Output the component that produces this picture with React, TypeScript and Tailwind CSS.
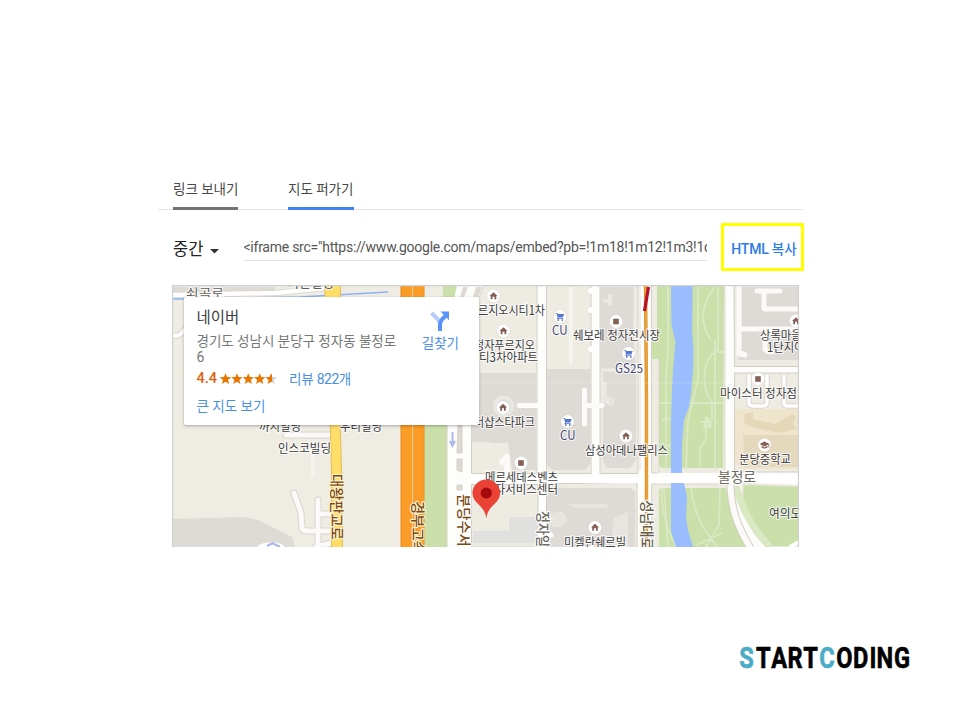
import React from "react";

const KR = "font-['Roboto','Noto_Sans_CJK_KR',sans-serif]";

type LabelProps = {
  x: number;
  y: number;
  w: number;
  children: string;
  fill?: string;
  size?: number;
};

function Label({ x, y, w, children, fill = "#3c3c3c", size = 12.5 }: LabelProps) {
  return (
    <text x={x} y={y} fontSize={size} fill={fill} stroke="#fff" strokeOpacity={0.8} strokeWidth={2.2} strokeLinejoin="round" paintOrder="stroke" textLength={w} lengthAdjust="spacingAndGlyphs" fontWeight={400}>
      {children}
    </text>
  );
}

function RoadName({ x, y, w, children, fill = "#7a4a14", halo = "#fff3d0" }: LabelProps & { halo?: string }) {
  return (
    <text transform={`translate(${x} ${y}) rotate(90)`} fontSize={14} fill={fill} stroke={halo} strokeWidth={2.2} strokeLinejoin="round" paintOrder="stroke" textLength={w} lengthAdjust="spacingAndGlyphs" fontWeight={500}>
      {children}
    </text>
  );
}

function Pin({ x, y, kind }: { x: number; y: number; kind: "home" | "cart" | "shop" | "school" }) {
  return (
    <g transform={`translate(${x} ${y})`}>
      <circle r={7} fill="#d5d0c8" opacity={0.5} />
      <circle r={6.4} fill="#fff" />
      {kind === "home" && <path d="M-4 0L0-3.7L4 0H2.8V3.2H1V.8H-1V3.2H-2.8V0Z" fill="#846057" />}
      {kind === "shop" && <rect x={-2.8} y={-2.8} width={5.6} height={5.6} fill="#846057" />}
      {kind === "cart" && (
        <g fill="#5673cd">
          <path d="M-4.2-3.6H-2.6L-2.1-2.4H4.2L2.8 1H-1.6L-2 1.7H3.1V2.5H-3.2L-2.4.7L-3.3-2.8H-4.2Z" />
          <circle cx={-1.7} cy={3.5} r={0.9} />
          <circle cx={2.3} cy={3.5} r={0.9} />
        </g>
      )}
      {kind === "school" && (
        <g fill="#846057">
          <path d="M-5-1L0-3.6L5-1L0 1.6Z" />
          <path d="M-3 .8V2.6Q0 4.4 3 2.6V.8L0 2.4Z" />
          <path d="M4-1H4.8V2.6H4Z" />
        </g>
      )}
    </g>
  );
}

function MapCanvas() {
  return (
    <svg className="block h-[262px] w-[627px] font-['Noto_Sans_CJK_KR',sans-serif]" viewBox="172 285 627 262">
      <rect x={172} y={285} width={627} height={262} fill="#fdfdfc" />

      {/* western blocks */}
      <rect x={172} y={285} width={275} height={262} fill="#efece4" />
      <path d="M173 287H275V292L173 293Z" fill="#dedad5" />
      <path d="M173 295L275 293L325 288" stroke="#d9d5cc" strokeWidth={6} fill="none" />
      <path d="M173 295L275 293L325 288" stroke="#fff" strokeWidth={4.5} fill="none" />
      <path d="M173 299H184L300 297L388 292" stroke="#8bb1f8" strokeWidth={1.6} fill="none" />
      <path d="M173 335C178 338 182 334 186 328" stroke="#d9d5cc" strokeWidth={6} fill="none" />
      <path d="M173 335C178 338 182 334 186 328" stroke="#fff" strokeWidth={4} fill="none" />
      <path d="M173 519L243 517L258 520L292 537L295 547H173Z" fill="#dedad5" />
      <g fill="none" strokeLinecap="round" strokeLinejoin="round">
        <path d="M286 435H331M294 493L301 513L302 528Q303 531 307 531H332M318 500V547M318 514H331M316 547L331 543M321 435H331" stroke="#d9d5cc" strokeWidth={7} />
        <path d="M286 435H331M294 493L301 513L302 528Q303 531 307 531H332M318 500V547M318 514H331M316 547L331 543M321 435H331" stroke="#fbfaf8" strokeWidth={5} />
        <path d="M313 454V476" stroke="#f5f2ed" strokeWidth={4} />
      </g>
      <ellipse cx={271} cy={547} rx={13} ry={4.5} fill="#fff" />
      <path d="M267 546L273 543M272 543L280 547" stroke="#aab5e8" strokeWidth={2} />

      {/* arterial and expressway */}
      <path d="M324 285H341L340 400L342 470L343 547H331L331 470L329 400Z" fill="#e4bc5b" />
      <path d="M325 285H340L339 400L341 470L342 547H332L332 470L330 400Z" fill="#ffdd69" />
      <path d="M424 285H447V547H424Z" fill="#cadfaa" />
      <path d="M424 285H443V297H424Z" fill="#efece4" />
      <rect x={400.5} y={285} width={24} height={262} fill="#e28a1d" />
      <rect x={401.5} y={285} width={10.5} height={262} fill="#fb9c26" />
      <rect x={413.3} y={285} width={10.5} height={262} fill="#fb9c26" />
      <rect x={412} y={285} width={1.2} height={262} fill="#f5c98a" />
      <path d="M443 285H457L454 300H443Z" fill="#cadfaa" />
      <path d="M447 425V547" stroke="#d5d2c8" />
      <path d="M463 287H468L463 300H459ZM476 287H482L477 300H472Z" fill="#dedad3" />
      <path d="M458 425H462V453H457ZM457 459H462V472L457 470ZM457 485H462V490H457Z" fill="#dedad3" stroke="#cac6bb" strokeWidth={0.7} />
      <path d="M452.5 432V445M450 441L452.5 446L455 441" stroke="#aab5e8" strokeWidth={1.8} fill="none" />

      {/* city blocks north of the cross street */}
      <g stroke="#d3cec4" strokeWidth={1}>
        <path d="M484 285H537V473.500H471.500V425H478V300Z" fill="#eeebe3" />
        <path d="M546.500 285H591V473.500H546.500Z" fill="#eeebe3" />
        <path d="M600 285H638V473.500H600Z" fill="#eeebe3" />
      </g>
      <path d="M480 373H536V470H512L508 443H472V425H479Z" fill="#dedad5" />
      <path d="M471.500 425H476L477 442H471.500Z" fill="#dedad5" />
      <path d="M547 369H590V463L586 470H552L547 465Z" fill="#dedad5" />
      <path d="M600.500 287H634L633 330L636 370V460L630 468H606L603 460V373L600.500 370Z" fill="#dedad5" />
      <path d="M601 370H637" stroke="#efece4" strokeWidth={3} />
      <path d="M571 287V364" stroke="#f5f3ee" strokeWidth={4} />
      <g stroke="#ebe8e3" strokeWidth={4} fill="none">
        <path d="M610 294V305M603 301H611M605 382V401H610" />
        <circle cx={610} cy={401} r={3} strokeWidth={2} />
        <circle cx={503.500} cy={406} r={8.5} strokeWidth={4} />
      </g>
      <g stroke="#fcfbfa" strokeWidth={5} strokeLinecap="round" fill="none">
        <path d="M519 405.500H539M584.500 390V424M584.500 405.500H602" />
        <path d="M507 459V472M502 462L507 457" strokeWidth={6} />
      </g>
      <circle cx={591} cy={291} r={3} fill="#fff" />
      <circle cx={591} cy={310} r={3} fill="#fff" />
      <circle cx={591} cy={349} r={3} fill="#fff" />
      <path d="M472 442H490V472H472Z" fill="#eeebe3" />

      {/* blocks south of the cross street */}
      <path d="M471.500 484.500H538V547H471.500Z" fill="#eeebe3" stroke="#d3cec4" />
      <path d="M509 517H537V543H473V531H509Z" fill="#e0e0df" />
      <path d="M546.500 484L637 482V547H546.500Z" fill="#eeebe3" stroke="#d3cec4" />
      <path d="M553 488H631L635 492V547H547V494Z" fill="#dedad5" />
      <path d="M568 504H606L609 508H574ZM549 514L562 511L568 520L560 527H552ZM613 518L628 512V547H612Z" fill="#e8e5e1" />
      <path d="M540 535H551" stroke="#fff" strokeWidth={5} strokeLinecap="round" />

      {/* park and river */}
      <path d="M651.500 285H658V473H651.500Z" fill="#efece4" stroke="#d3cec4" strokeWidth={0.8} />
      <path d="M657 285H725V473H657Z" fill="#eeebe3" />
      <path d="M657 285H724L723 468H661L657 460V394H659V359H652V340H657Z" fill="#cadfaa" />
      <path d="M652 360H659V472H652Z" fill="#eeebe3" />
      <path d="M651.500 484H730L733 510L750 547H651.500Z" fill="#eeebe3" stroke="#d3cec4" strokeWidth={0.8} />
      <path d="M661 488H726Q730 518 748 547H659V490Z" fill="#cadfaa" />
      <path d="M659 359V473" stroke="#d3cec4" strokeWidth={0.6} />
      <g stroke="#dae9c4" strokeWidth={1.8} fill="none">
        <path d="M668 287V350L666 380V470M698 287V380L688 420L686 470M715 287C700 305 700 325 711 340M718 287V350C700 360 702 390 712 402V420M715 340V470M717 352H724M659 403H724M662 420L672 418M700 422H712M706 422V440L700 448V466M661 450L671 444M664 488L668 547M691 488C694 515 704 531 718 547M720 488L719 525L706 547M697 545L722 533" />
        <path d="M706 418L704 427H711L708 418Z" fill="#dae9c4" />
        <path d="M662 488C660 510 668 530 676 547" />
      </g>
      <path d="M671 285H692.500V305L692 330L693.500 350L693 370L691 395L689 407L684 420L682 445V473H671V420L672 390L673 370L675.500 342L671.500 325Z" fill="#99bdff" />
      <path d="M671 483H684L687 497L686 518L688 530L693 547H676L671 531Z" fill="#99bdff" />

      {/* eastern blocks */}
      <path d="M734 285H799V366.500H734.500Z" fill="#eeebe3" stroke="#d3cec4" />
      <path d="M741 287H799V360H738L741 343Z" fill="#dedad5" />
      <g stroke="#fbfaf8" strokeWidth={5} fill="none" strokeLinecap="round" strokeLinejoin="round">
        <path d="M739 287V354L745 355M740 329H799M757 291H780M764 291V308Q764 309 766 309H797" />
        <path d="M765 329V349Q766 352 772 352M740 353L744 354" />
      </g>
      <path d="M734.500 373H799V472H734.500Z" fill="#eeebe3" stroke="#d3cec4" />
      <path d="M749 375V403Q749 406 753 406H763Q767 406 767 402V375M784 375V403Q784 406 788 406H799" stroke="#d3cec4" strokeWidth={5} fill="none" />
      <path d="M749 375V403Q749 406 753 406H763Q767 406 767 402V375M784 375V403Q784 406 788 406H799" stroke="#fff" strokeWidth={3.5} fill="none" />
      <path d="M738 409H799V469H740L735 462V412Z" fill="#efe5cd" />
      <path d="M745 414L753 412V419L775 424L792 414L796 417L793 424L797 429L779 433L752 427L744 423Z" fill="#e5d8b9" />
      <path d="M743 435H799V467H745Z" fill="#e5d9bd" />
      <path d="M743 484L799 486V547H767Q747 528 742 505Z" fill="#cadfaa" stroke="#e9e6dc" strokeWidth={2} />
      <path d="M736 486Q744 520 770 547" stroke="#dae9c4" strokeWidth={7} fill="none" />
      <path d="M730.500 480C730 508 738 528 751 549" stroke="#d3cec4" strokeWidth={8} fill="none" />
      <path d="M730.500 480C730 508 738 528 751 549" stroke="#fbfaf8" strokeWidth={6} fill="none" />
      <path d="M790 547L799 542" stroke="#fff" strokeWidth={4} />
      <path d="M725 287V470M651.500 287V470M640 287V470" stroke="#d3cec4" strokeWidth={0.7} />

      {/* cross street */}
      <path d="M472 475L640 478L724 475H799V482L724 481L640 483L472 483Z" fill="#fff" />
      <path d="M640.500 470H651V490H640.500Z" fill="#fff" />
      <path d="M645.500 285L646.500 400V547" stroke="#d98f27" strokeWidth={3.4} fill="none" />
      <path d="M645.700 285L646.700 400V547" stroke="#eca337" strokeWidth={2} fill="none" />
      <path d="M648.500 287L644.500 311" stroke="#b90e2d" strokeWidth={3.2} />
      <path d="M172 383H799" stroke="#fff" strokeWidth={0.6} opacity={0.35} />

      {/* place names */}
      <Label x={186} y={298} w={38} fill="#66615a">쇠곡로</Label>
      <Label x={288} y={287.500} w={46}>가온빌딩</Label>
      <Label x={259} y={430.500} w={42}>까치빌딩</Label>
      <Label x={340} y={430.500} w={42}>우리빌딩</Label>
      <Label x={278} y={452.500} w={53}>인스코빌딩</Label>
      <Label x={478} y={314.500} w={67}>르지오시티1차</Label>
      <Label x={474} y={350} w={61}>정자푸르지오</Label>
      <Label x={479} y={361.500} w={59}>티3차아파트</Label>
      <Label x={552} y={335} w={15.500} fill="#464975">CU</Label>
      <Label x={573} y={340} w={87}>쉐보레 정자전시장</Label>
      <Label x={615} y={372.500} w={28} fill="#464975">GS25</Label>
      <Label x={474} y={426.500} w={61}>더샵스타파크</Label>
      <Label x={560} y={440} w={15.500} fill="#464975">CU</Label>
      <Label x={585} y={455} w={83}>삼성아데나팰리스</Label>
      <Label x={485} y={482} w={73}>메르세데스벤츠</Label>
      <Label x={484} y={493.500} w={74}>수자서비스센터</Label>
      <Label x={564} y={546.500} w={62}>미켈란쉐르빌</Label>
      <Label x={760} y={340} w={52}>상록마을라</Label>
      <Label x={767} y={352} w={48}>1단지아파</Label>
      <Label x={720} y={398} w={77}>마이스터 정자점</Label>
      <Label x={739} y={464} w={52}>분당중학교</Label>
      <Label x={718} y={481.500} w={38} size={13.5} fill="#6d6a62">불정로</Label>
      <Label x={769} y={518} w={54}>여의도공원</Label>
      <RoadName x={332} y={474} w={66}>대왕판교로</RoadName>
      <RoadName x={413} y={501} w={66}>경부고속도</RoadName>
      <RoadName x={458.500} y={494} w={66} halo="#fff">분당수서로</RoadName>
      <RoadName x={537.500} y={511} w={48} halo="#fff" fill="#6d6a62">정자일로</RoadName>
      <RoadName x={642} y={500} w={50} halo="#fff" fill="#665b45">성남대로</RoadName>

      <Pin x={493.500} y={296} kind="home" />
      <Pin x={503.500} y={331} kind="home" />
      <Pin x={503} y={407.500} kind="home" />
      <Pin x={626} y={436} kind="home" />
      <Pin x={595} y={527.500} kind="home" />
      <Pin x={796} y={321} kind="home" />
      <Pin x={560} y={316.500} kind="cart" />
      <Pin x={628.500} y={353.500} kind="cart" />
      <Pin x={567.500} y={421.500} kind="cart" />
      <Pin x={616} y={321.500} kind="shop" />
      <Pin x={521} y={463} kind="shop" />
      <Pin x={758} y={379} kind="shop" />
      <Pin x={764.500} y={445} kind="school" />

      <path d="M486.300 518.500C485 505 472.500 504 472.500 493.300A13.800 13.800 0 0 1 500.100 493.300C500.100 504 487.600 505 486.300 518.500Z" fill="#ea4335" />
      <circle cx={486.300} cy={493} r={5.600} fill="#a40b0e" />
      <path d="M172.500 547V285.700H798.500V547" fill="none" stroke="#cfcfcf" strokeWidth={1.2} />
    </svg>
  );
}

function Star({ fill }: { fill: string }) {
  return <path d="M0-5.800L1.600-1.900L5.700-1.700L2.500.900L3.600 5L0 2.700L-3.600 5L-2.500.900L-5.700-1.700L-1.600-1.900Z" fill={fill} />;
}

function Stars() {
  return (
    <svg className="h-[12px] w-[58px]" viewBox="0 0 58 12">
      <defs>
        <linearGradient id="half">
          <stop offset="55%" stopColor="#e77600" />
          <stop offset="55%" stopColor="#cfcfcf" />
        </linearGradient>
      </defs>
      {[0, 1, 2, 3, 4].map((i) => (
        <g key={i} transform={`translate(${5.5 + i * 11.4} 6)`}>
          <Star fill={i === 4 ? "url(#half)" : "#e77600"} />
        </g>
      ))}
    </svg>
  );
}

function PlaceCard() {
  return (
    <div className="absolute left-3 top-3 flex h-[128px] w-[295px] justify-between rounded-[2px] bg-white pl-[12.500px] pr-[20px] shadow-[0_1px_3px_rgba(0,0,0,0.3)]">
      <div className="flex w-[205px] flex-col whitespace-nowrap text-[13.500px] leading-4">
        <div className="mt-[11px] text-[15.500px] leading-5 text-[#404040]">네이버</div>
        <div className="mt-[5px] text-[#777]">경기도 성남시 분당구 정자동 불정로</div>
        <div className="text-[14px] text-[#777]">6</div>
        <div className="mt-[6px] flex items-center">
          <span className="w-[23px] text-[14.500px] font-medium text-[#dd5f10]">4.4</span>
          <Stars />
          <span className="ml-[11.500px] text-[13.500px] tracking-[-0.15px] text-[#4a90e2]">
            리뷰 <span className="text-[14px] tracking-[-0.500px]">822</span>개
          </span>
        </div>
        <div className="mt-[11px] text-[#4a90e2]">큰 지도 보기</div>
      </div>
      <div className="flex flex-col items-center whitespace-nowrap pt-[14px]">
        <svg className="h-[20px] w-[20px]" viewBox="0 0 20 20">
          <path d="M1.500 2L8 8.500L10.500 13" stroke="#b5cdfb" strokeWidth={4} fill="none" />
          <path d="M10 20V14Q10 10.500 12 8.300L15.500 5" stroke="#5a92f7" strokeWidth={4} fill="none" />
          <path d="M10.500 .5H19V9.300Z" fill="#5a92f7" />
        </svg>
        <div className="mt-[4px] text-[13.500px] leading-4 text-[#4a90e2]">길찾기</div>
      </div>
    </div>
  );
}

export default function App() {
  return (
    <main className={`flex h-[720px] w-[960px] flex-col overflow-hidden bg-white pt-[178px] ${KR}`}>
      <section className="ml-[158px] flex w-[646px] flex-col">
        <nav className="mr-px flex h-[32px] gap-[50px] border-b border-[#e6e6e6] pl-[15px] text-[13.500px] leading-[22px] text-[#484848]">
          <div className="h-[32px] w-[65px] whitespace-nowrap border-b-[3px] border-[#737373]">링크 보내기</div>
          <div className="h-[32px] w-[65.500px] whitespace-nowrap border-b-[3px] border-[#3f82f7]">지도 퍼가기</div>
        </nav>
        <div className="flex h-[75px] pl-[15px] pt-[13px]">
          <div className="flex h-[50px] w-[70.500px] items-center pt-[4px] text-[16.500px] text-[#222]">
            중간
            <svg className="ml-[7px] mt-[2px] h-[5px] w-[9px]" viewBox="0 0 9 5">
              <path d="M0 0H9L4.500 4.500Z" fill="#333" />
            </svg>
          </div>
          <div className="mt-[12px] h-[26px] w-[463.500px] overflow-hidden whitespace-nowrap border-b border-[#e2e2e2] text-[14px] leading-[25px] tracking-[-0.250px] text-[#555]">
            &lt;iframe src="https://www.google.com/maps/embed?pb=!1m18!1m12!1m3!1d3168
          </div>
          <button className="ml-[14px] flex h-[48px] w-[83px] items-center justify-center whitespace-nowrap rounded-[1px] border-[3px] border-[#ffff00] pl-[3px] pt-[4px] text-[13.500px] font-medium text-[#2a7be8]">
            <span className="whitespace-pre text-[14px] tracking-[-0.200px]">HTML </span>복사
          </button>
        </div>
        <div className="relative ml-[14px] h-[262px] w-[627px] overflow-hidden">
          <MapCanvas />
          <PlaceCard />
        </div>
      </section>
      <footer className="mt-[93px] flex pl-[738px]">
        <svg className="h-[36px] w-[176px] font-['Roboto',sans-serif]" viewBox="0 0 176 36">
          <g transform="scale(0.8 1)" fontSize={29.5} fontWeight={700} fill="#000" stroke="#000" strokeWidth={0.6}>
            <text x="1.500 22.500 41.500 61.800 81.500 101.500 122.800 143.800 164.500 173 195" y={28}>
              <tspan fill="#4bacc6" stroke="#4bacc6">S</tspan>TART<tspan fill="#4bacc6" stroke="#4bacc6">C</tspan>ODING
            </text>
          </g>
        </svg>
      </footer>
    </main>
  );
}
